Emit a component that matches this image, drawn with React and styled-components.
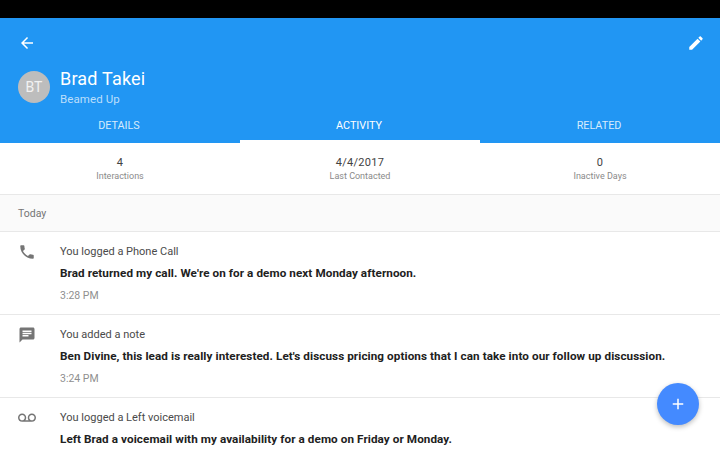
import React from 'react';
import styled, { createGlobalStyle } from 'styled-components';

const Global = createGlobalStyle`
  html, body { margin: 0; padding: 0; background: #fff; }
  body { font-family: Roboto, "Noto Sans", sans-serif; }
`;

const Screen = styled.div`
  position: relative;
  width: 720px;
  height: 450px;
  overflow: hidden;
  display: flex;
  flex-direction: column;
  background: #fff;
`;
const StatusBar = styled.div`
  height: 18px;
  background: #000;
  flex: none;
`;
const Header = styled.header`
  background: #2196f3;
  height: 125px;
  flex: none;
  display: flex;
  flex-direction: column;
  color: #fff;
`;
const Toolbar = styled.div`
  height: 48px;
  display: flex;
  align-items: center;
  justify-content: space-between;
  padding: 1px 15px 0 18px;
  box-sizing: border-box;
  flex: none;
`;
const IconSlot = styled.svg`
  width: ${p => p.$size || 18}px;
  height: ${p => p.$size || 18}px;
  fill: ${p => p.$color || '#fff'};
  display: block;
  flex: none;
`;
const Profile = styled.div`
  display: flex;
  align-items: center;
  gap: 10px;
  padding: 0 18px;
  height: 41px;
  flex: none;
`;
const Avatar = styled.div`
  width: 32px;
  height: 32px;
  border-radius: 50%;
  background: #bdbdbd;
  color: #f2f2f2;
  font-size: 14px;
  display: flex;
  align-items: center;
  justify-content: center;
`;
const Names = styled.div`
  display: flex;
  flex-direction: column;
`;
const Name = styled.div`
  font-size: 18px;
  line-height: 24px;
  letter-spacing: 0.2px;
`;
const Sub = styled.div`
  font-size: 11.5px;
  line-height: 14px;
  margin-top: 1px;
  color: #bbdefb;
  letter-spacing: 0.1px;
`;
const Tabs = styled.nav`
  display: flex;
  flex: 1;
  margin-top: 3px;
`;
const Tab = styled.div`
  flex: 1;
  display: flex;
  align-items: center;
  justify-content: center;
  font-size: 10.8px;
  font-weight: 400;
  color: ${p => (p.$active ? '#fff' : '#d6ebfc')};
  box-sizing: border-box;
  padding-right: 2px;
  padding-bottom: ${p => (p.$active ? '0' : '3px')};
  border-bottom: ${p => (p.$active ? '3px solid #fff' : 'none')};
`;
const Stats = styled.section`
  display: flex;
  height: 51px;
  flex: none;
  border-bottom: 1px solid #e8e8e8;
`;
const Stat = styled.div`
  flex: 1;
  display: flex;
  flex-direction: column;
  align-items: center;
  padding-top: 13px;
`;
const StatValue = styled.div`
  font-size: 11px;
  line-height: 13px;
  color: #424242;
  letter-spacing: 0.3px;
`;
const StatLabel = styled.div`
  font-size: 9px;
  line-height: 14px;
  color: #8a8a8a;
`;
const DayHeader = styled.div`
  height: 36px;
  flex: none;
  background: #fafafa;
  border-bottom: 1px solid #e8e8e8;
  display: flex;
  align-items: center;
  padding: 0 18px;
  font-size: 10.5px;
  color: #757575;
`;
const Row = styled.article`
  height: 82px;
  flex: none;
  display: flex;
  border-bottom: 1px solid #e8e8e8;
`;
const IconCol = styled.div`
  width: 60px;
  flex: none;
  padding: 11px 0 0 18px;
  box-sizing: border-box;
`;
const Body = styled.div`
  display: flex;
  flex-direction: column;
  padding-top: 13px;
`;
const Title = styled.div`
  font-size: 11px;
  line-height: 14px;
  color: #4a4a4a;
`;
const Message = styled.div`
  font-size: 11.7px;
  font-weight: 700;
  letter-spacing: 0.08px;
  line-height: 16px;
  margin-top: 6px;
  color: #212121;
  white-space: nowrap;
`;
const Time = styled.div`
  font-size: 10.5px;
  line-height: 14px;
  margin-top: 8px;
  color: #8f8f8f;
`;
const Fab = styled.button`
  position: absolute;
  left: 657px;
  top: 383px;
  width: 42px;
  height: 42px;
  border: 0;
  padding: 0;
  border-radius: 50%;
  background: #448aff;
  display: flex;
  align-items: center;
  justify-content: center;
  box-shadow: 0 2px 5px rgba(0,0,0,0.26);
`;

const Icon = ({ d, size, color }) => (
  <IconSlot viewBox="0 0 24 24" $size={size} $color={color}><path d={d} /></IconSlot>
);
const paths = {
  back: 'M20 11H7.83l5.59-5.59L12 4l-8 8 8 8 1.41-1.41L7.83 13H20v-2z',
  edit: 'M3 17.25V21h3.75L17.81 9.94l-3.75-3.75L3 17.25zM20.71 7.04c.39-.39.39-1.02 0-1.41l-2.34-2.34c-.39-.39-1.02-.39-1.41 0l-1.83 1.83 3.75 3.75 1.83-1.83z',
  phone: 'M6.62 10.79c1.44 2.83 3.76 5.14 6.59 6.59l2.2-2.2c.27-.27.67-.36 1.02-.24 1.12.37 2.33.57 3.57.57.55 0 1 .45 1 1V20c0 .55-.45 1-1 1-9.39 0-17-7.61-17-17 0-.55.45-1 1-1h3.5c.55 0 1 .45 1 1 0 1.25.2 2.45.57 3.57.11.35.03.74-.25 1.02l-2.2 2.2z',
  note: 'M20 2H4c-1.1 0-1.99.9-1.99 2L2 22l4-4h14c1.1 0 2-.9 2-2V4c0-1.1-.9-2-2-2zM6 9h12v2H6V9zm8 5H6v-2h8v2zm4-6H6V6h12v2z',
  voicemail: 'M18.5 6C15.46 6 13 8.46 13 11.5c0 1.33.47 2.55 1.26 3.5H9.74c.79-.95 1.26-2.17 1.26-3.5C11 8.46 8.54 6 5.5 6S0 8.46 0 11.5 2.46 17 5.5 17h13c3.04 0 5.5-2.46 5.5-5.5S21.54 6 18.5 6zm-13 9C3.57 15 2 13.43 2 11.5S3.57 8 5.5 8 9 9.57 9 11.5 7.43 15 5.5 15zm13 0c-1.93 0-3.5-1.57-3.5-3.5S16.57 8 18.5 8 22 9.57 22 11.5 20.43 15 18.5 15z',
  add: 'M19 13h-6v6h-2v-6H5v-2h6V5h2v6h6v2z',
};

const activity = [
  { icon: 'phone', title: 'You logged a Phone Call', message: "Brad returned my call. We're on for a demo next Monday afternoon.", time: '3:28 PM' },
  { icon: 'note', title: 'You added a note', message: "Ben Divine, this lead is really interested. Let's discuss pricing options that I can take into our follow up discussion.", time: '3:24 PM' },
  { icon: 'voicemail', title: 'You logged a Left voicemail', message: 'Left Brad a voicemail with my availability for a demo on Friday or Monday.', time: '' },
];

export default function App() {
  return (
    <Screen>
      <Global />
      <StatusBar />
      <Header>
        <Toolbar>
          <Icon d={paths.back} />
          <Icon d={paths.edit} />
        </Toolbar>
        <Profile>
          <Avatar>BT</Avatar>
          <Names>
            <Name>Brad Takei</Name>
            <Sub>Beamed Up</Sub>
          </Names>
        </Profile>
        <Tabs>
          <Tab>DETAILS</Tab>
          <Tab $active>ACTIVITY</Tab>
          <Tab>RELATED</Tab>
        </Tabs>
      </Header>
      <Stats>
        <Stat><StatValue>4</StatValue><StatLabel>Interactions</StatLabel></Stat>
        <Stat><StatValue>4/4/2017</StatValue><StatLabel>Last Contacted</StatLabel></Stat>
        <Stat><StatValue>0</StatValue><StatLabel>Inactive Days</StatLabel></Stat>
      </Stats>
      <DayHeader>Today</DayHeader>
      {activity.map(a => (
        <Row key={a.title}>
          <IconCol><Icon d={paths[a.icon]} color="#757575" /></IconCol>
          <Body>
            <Title>{a.title}</Title>
            <Message>{a.message}</Message>
            {a.time && <Time>{a.time}</Time>}
          </Body>
        </Row>
      ))}
      <Fab aria-label="Add"><Icon d={paths.add} size={18} /></Fab>
    </Screen>
  );
}
